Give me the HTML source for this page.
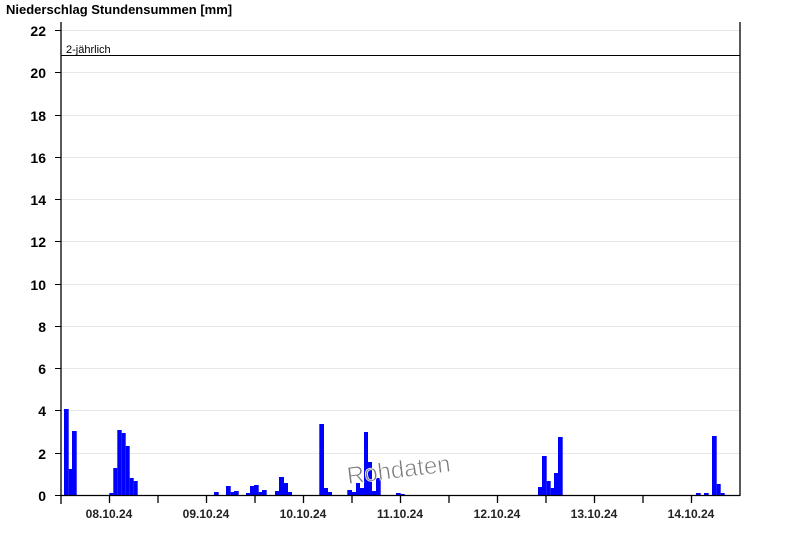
<!DOCTYPE html>
<html><head><meta charset="utf-8"><style>
html,body{margin:0;padding:0;background:#fff;width:800px;height:550px;overflow:hidden}
svg{display:block}
text{font-family:"Liberation Sans",Arial,sans-serif}
</style></head><body>
<svg width="800" height="550" viewBox="0 0 800 550">
<text x="6" y="14" font-size="13" font-weight="bold" fill="#000">Niederschlag Stundensummen [mm]</text>
<g stroke="#e8e8e8" stroke-width="1">
<line x1="61" x2="740" y1="30.5" y2="30.5"/>
<line x1="61" x2="740" y1="72.5" y2="72.5"/>
<line x1="61" x2="740" y1="115.5" y2="115.5"/>
<line x1="61" x2="740" y1="157.5" y2="157.5"/>
<line x1="61" x2="740" y1="199.5" y2="199.5"/>
<line x1="61" x2="740" y1="241.5" y2="241.5"/>
<line x1="61" x2="740" y1="284.5" y2="284.5"/>
<line x1="61" x2="740" y1="326.5" y2="326.5"/>
<line x1="61" x2="740" y1="368.5" y2="368.5"/>
<line x1="61" x2="740" y1="410.5" y2="410.5"/>
<line x1="61" x2="740" y1="453.5" y2="453.5"/>
</g>
<g font-size="14" font-weight="bold" text-anchor="end" fill="#000">
<text x="46" y="36">22</text><text x="46" y="78">20</text><text x="46" y="121">18</text>
<text x="46" y="163">16</text><text x="46" y="205">14</text><text x="46" y="247">12</text>
<text x="46" y="290">10</text><text x="46" y="332">8</text><text x="46" y="374">6</text>
<text x="46" y="416">4</text><text x="46" y="459">2</text><text x="46" y="501">0</text>
</g>
<g stroke="#000" stroke-width="1">
<line x1="55" x2="61" y1="30.5" y2="30.5"/><line x1="55" x2="61" y1="72.5" y2="72.5"/>
<line x1="55" x2="61" y1="115.5" y2="115.5"/><line x1="55" x2="61" y1="157.5" y2="157.5"/>
<line x1="55" x2="61" y1="199.5" y2="199.5"/><line x1="55" x2="61" y1="241.5" y2="241.5"/>
<line x1="55" x2="61" y1="284.5" y2="284.5"/><line x1="55" x2="61" y1="326.5" y2="326.5"/>
<line x1="55" x2="61" y1="368.5" y2="368.5"/><line x1="55" x2="61" y1="410.5" y2="410.5"/>
<line x1="55" x2="61" y1="453.5" y2="453.5"/><line x1="55" x2="61" y1="495.5" y2="495.5"/>
</g>
<g fill="#0000ff">
<rect x="64" y="409" width="4.7" height="86"/>
<rect x="68.7" y="469" width="3.3" height="26"/>
<rect x="72" y="431" width="4.7" height="64"/>
<rect x="109.3" y="493" width="4" height="2"/>
<rect x="113.3" y="468" width="4" height="27"/>
<rect x="117.3" y="430" width="4.4" height="65"/>
<rect x="121.7" y="433" width="4" height="62"/>
<rect x="125.7" y="446" width="4" height="49"/>
<rect x="129.7" y="478" width="4" height="17"/>
<rect x="133.7" y="481" width="4" height="14"/>
<rect x="214" y="492" width="4.7" height="3"/>
<rect x="226" y="486" width="4.7" height="9"/>
<rect x="230.7" y="492" width="3.3" height="3"/>
<rect x="234" y="491" width="4.7" height="4"/>
<rect x="246" y="493" width="4" height="2"/>
<rect x="250" y="486" width="4" height="9"/>
<rect x="254" y="485" width="4.7" height="10"/>
<rect x="258.7" y="492" width="3.3" height="3"/>
<rect x="262" y="490" width="4.7" height="5"/>
<rect x="275" y="491" width="4" height="4"/>
<rect x="279" y="477" width="5" height="18"/>
<rect x="284" y="483" width="4" height="12"/>
<rect x="288" y="492" width="4" height="3"/>
<rect x="319.3" y="424" width="4.7" height="71"/>
<rect x="324" y="488" width="4" height="7"/>
<rect x="328" y="492" width="4" height="3"/>
<rect x="347.3" y="490" width="4.7" height="5"/>
<rect x="352" y="492" width="4" height="3"/>
<rect x="356" y="483" width="4" height="12"/>
<rect x="360" y="488" width="4" height="7"/>
<rect x="364" y="432" width="4" height="63"/>
<rect x="368" y="462" width="4" height="33"/>
<rect x="372" y="491" width="4" height="4"/>
<rect x="376" y="478" width="4.7" height="17"/>
<rect x="396" y="493" width="4.7" height="2"/>
<rect x="400.7" y="494" width="4" height="1"/>
<rect x="538" y="487" width="4" height="8"/>
<rect x="542" y="456" width="4.7" height="39"/>
<rect x="546.7" y="481" width="4" height="14"/>
<rect x="550.7" y="488" width="3.3" height="7"/>
<rect x="554" y="473" width="4" height="22"/>
<rect x="558" y="437" width="4.7" height="58"/>
<rect x="696" y="493" width="4.7" height="2"/>
<rect x="704" y="493" width="4.7" height="2"/>
<rect x="712" y="436" width="4.7" height="59"/>
<rect x="716.7" y="484" width="4" height="11"/>
<rect x="720.7" y="493" width="4" height="2"/>
</g>
<line x1="61" x2="740" y1="55.5" y2="55.5" stroke="#000" stroke-width="1"/>
<text x="66" y="53" font-size="11" fill="#000">2-jährlich</text>
<g stroke="#000" stroke-width="1.3">
<line x1="61" x2="61" y1="22" y2="504"/>
<line x1="740" x2="740" y1="22" y2="496"/>
<line x1="61" x2="740" y1="495.5" y2="495.5"/>
</g>
<g stroke="#000" stroke-width="1.3">
<line x1="109.5" x2="109.5" y1="495" y2="503"/><line x1="158" x2="158" y1="495" y2="503"/>
<line x1="206.5" x2="206.5" y1="495" y2="503"/><line x1="255" x2="255" y1="495" y2="503"/>
<line x1="303.5" x2="303.5" y1="495" y2="503"/><line x1="352" x2="352" y1="495" y2="503"/>
<line x1="400.5" x2="400.5" y1="495" y2="503"/><line x1="449" x2="449" y1="495" y2="503"/>
<line x1="497.5" x2="497.5" y1="495" y2="503"/><line x1="546" x2="546" y1="495" y2="503"/>
<line x1="594.5" x2="594.5" y1="495" y2="503"/><line x1="643" x2="643" y1="495" y2="503"/>
<line x1="691.5" x2="691.5" y1="495" y2="503"/>
</g>
<g font-size="12" font-weight="bold" text-anchor="middle" fill="#222">
<text x="109" y="518">08.10.24</text><text x="206" y="518">09.10.24</text>
<text x="303" y="518">10.10.24</text><text x="400" y="518">11.10.24</text>
<text x="497" y="518">12.10.24</text><text x="594" y="518">13.10.24</text>
<text x="691" y="518">14.10.24</text>
</g>
<text x="348" y="484" font-size="24" fill="#7a7a7a" stroke="#ffffff" stroke-width="0.7" transform="rotate(-7 348 484)">Rohdaten</text>
</svg>
</body></html>
